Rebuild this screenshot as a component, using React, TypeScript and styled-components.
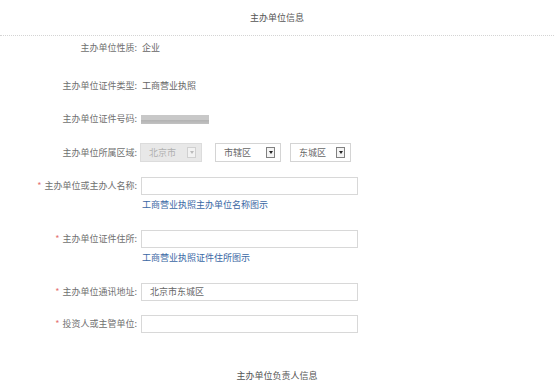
import React from "react";
import styled, { createGlobalStyle } from "styled-components";

const GlobalStyle = createGlobalStyle`
  html, body {
    margin: 0;
    padding: 0;
    background: #fff;
  }
  body {
    font-family: "Noto Sans CJK SC", "Noto Sans", sans-serif;
    font-size: 9px;
    color: #666;
  }
`;

const Page = styled.div`
  width: 554px;
  height: 382px;
  overflow: hidden;
  display: flex;
  flex-direction: column;
`;

const SectionTitle = styled.div<{ $line?: boolean; $top?: number }>`
  height: ${(p) => (p.$line ? "35px" : "12px")};
  line-height: ${(p) => (p.$line ? "35px" : "12px")};
  margin-top: ${(p) => p.$top ?? 0}px;
  text-align: center;
  color: #555;
  border-bottom: ${(p) => (p.$line ? "1px dotted #d4d4d4" : "none")};
`;

const Row = styled.div<{ $top: number }>`
  display: grid;
  grid-template-columns: 137px auto;
  column-gap: 5px;
  align-items: start;
  margin-top: ${(p) => p.$top}px;
`;

const Label = styled.div<{ $h: number }>`
  text-align: right;
  line-height: ${(p) => p.$h}px;
  height: ${(p) => p.$h}px;
  color: #707070;
  white-space: nowrap;
`;

const Star = styled.span`
  color: #e57373;
  margin-right: 3px;
`;

const Value = styled.div`
  line-height: 12px;
  color: #666;
`;

const Masked = styled.div`
  width: 68px;
  height: 9px;
  margin-top: 2px;
  margin-left: -1px;
  background: linear-gradient(180deg, #c8c8c8 0%, #c8c8c8 60%, #b4b4b4 61%, #c2c2c2 100%);
`;

const Field = styled.div`
  display: flex;
  flex-direction: column;
`;

const TextInput = styled.div`
  box-sizing: border-box;
  width: 217px;
  height: 18px;
  margin-left: -1px;
  border: 1px solid #d8d8d8;
  background: #fff;
  padding-left: 8px;
  line-height: 16px;
  color: #666;
`;

const Hint = styled.a`
  margin-top: 4px;
  line-height: 12px;
  color: #3a67a4;
  text-decoration: none;
`;

const Selects = styled.div`
  display: flex;
  align-items: center;
  margin-left: -2px;
`;

const Select = styled.div<{ $w: number; $gap: number; $disabled?: boolean }>`
  box-sizing: border-box;
  width: ${(p) => p.$w}px;
  height: 19px;
  margin-left: ${(p) => p.$gap}px;
  border: 1px solid ${(p) => (p.$disabled ? "#dcdcdc" : "#d4d4d4")};
  background: ${(p) => (p.$disabled ? "#e8e8e8" : "#fff")};
  color: ${(p) => (p.$disabled ? "#b0b0b0" : "#666")};
  display: flex;
  align-items: center;
  justify-content: space-between;
  padding: 0 5px 0 8px;
`;

const Arrow = styled.span<{ $disabled?: boolean }>`
  box-sizing: border-box;
  width: 9px;
  height: 11px;
  border: 1px solid ${(p) => (p.$disabled ? "#d0d0d0" : "#808080")};
  background: ${(p) => (p.$disabled ? "#f2f2f2" : "#f4f4f4")};
  display: flex;
  align-items: center;
  justify-content: center;
  &::after {
    content: "";
    border-left: 2px solid transparent;
    border-right: 2px solid transparent;
    border-top: 3px solid ${(p) => (p.$disabled ? "#bbb" : "#222")};
  }
`;

export default function App() {
  return (
    <Page>
      <GlobalStyle />
      <SectionTitle $line>主办单位信息</SectionTitle>

      <Row $top={6}>
        <Label $h={12}>主办单位性质:</Label>
        <Value>企业</Value>
      </Row>

      <Row $top={26}>
        <Label $h={12}>主办单位证件类型:</Label>
        <Value>工商营业执照</Value>
      </Row>

      <Row $top={21}>
        <Label $h={12}>主办单位证件号码:</Label>
        <Masked />
      </Row>

      <Row $top={18}>
        <Label $h={19}>主办单位所属区域:</Label>
        <Selects>
          <Select $w={62} $gap={0} $disabled>
            北京市
            <Arrow $disabled />
          </Select>
          <Select $w={66} $gap={13}>
            市辖区
            <Arrow />
          </Select>
          <Select $w={61} $gap={9}>
            东城区
            <Arrow />
          </Select>
        </Selects>
      </Row>

      <Row $top={15}>
        <Label $h={18}>
          <Star>*</Star>主办单位或主办人名称:
        </Label>
        <Field>
          <TextInput />
          <Hint>工商营业执照主办单位名称图示</Hint>
        </Field>
      </Row>

      <Row $top={19}>
        <Label $h={18}>
          <Star>*</Star>主办单位证件住所:
        </Label>
        <Field>
          <TextInput />
          <Hint>工商营业执照证件住所图示</Hint>
        </Field>
      </Row>

      <Row $top={19}>
        <Label $h={18}>
          <Star>*</Star>主办单位通讯地址:
        </Label>
        <TextInput>北京市东城区</TextInput>
      </Row>

      <Row $top={14}>
        <Label $h={18}>
          <Star>*</Star>投资人或主管单位:
        </Label>
        <TextInput />
      </Row>

      <SectionTitle $top={37}>主办单位负责人信息</SectionTitle>
    </Page>
  );
}
